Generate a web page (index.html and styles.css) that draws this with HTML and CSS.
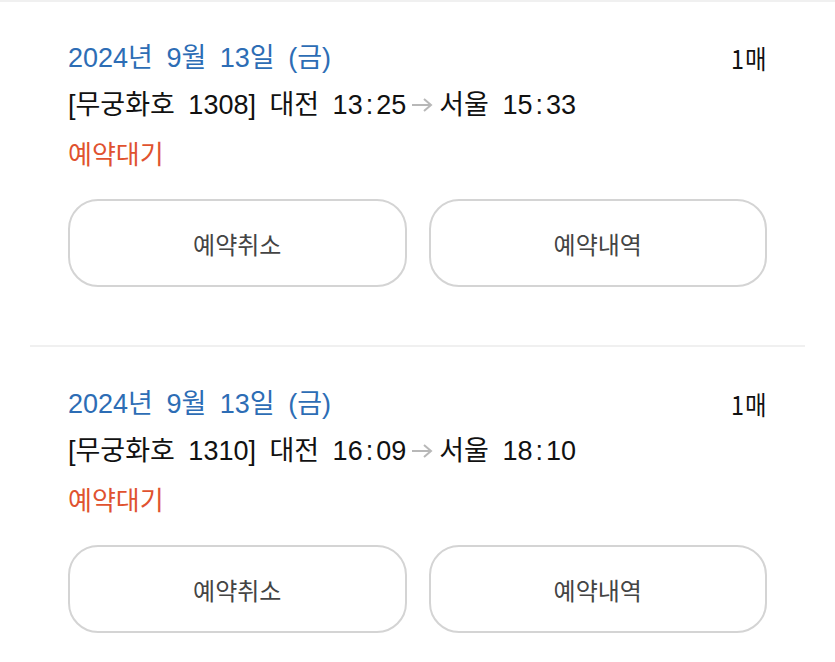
FILE: index.html
```html
<!DOCTYPE html>
<html lang="ko">
<head>
    <meta charset="UTF-8">
    <meta name="viewport" content="width=device-width, initial-scale=1.0">
    <title>예약 내역</title>
    <link rel="stylesheet" href="styles.css">
</head>
<body>
    <div class="list">
        <div class="ticket">
            <div class="ticket-head">
                <span class="date">2024년 9월 13일 (금)</span>
                <span class="count">1매</span>
            </div>
            <p class="route">[무궁화호 1308] 대전 13<span class="colon">:</span>25<svg class="arrow" viewBox="0 0 24 16"><path d="M2 8h19M14 2l7 6-7 6"></path></svg>서울 15<span class="colon">:</span>33</p>
            <p class="status">예약대기</p>
            <div class="actions">
                <button class="btn">예약취소</button>
                <button class="btn">예약내역</button>
            </div>
        </div>

        <div class="ticket">
            <div class="ticket-head">
                <span class="date">2024년 9월 13일 (금)</span>
                <span class="count">1매</span>
            </div>
            <p class="route">[무궁화호 1310] 대전 16<span class="colon">:</span>09<svg class="arrow" viewBox="0 0 24 16"><path d="M2 8h19M14 2l7 6-7 6"></path></svg>서울 18<span class="colon">:</span>10</p>
            <p class="status">예약대기</p>
            <div class="actions">
                <button class="btn">예약취소</button>
                <button class="btn">예약내역</button>
            </div>
        </div>
    </div>
</body>
</html>
```

FILE: styles.css
```css
body {
    margin: 0;
    padding: 0;
    background: #fff;
    color: #111;
    font-family: 'Liberation Sans', 'Noto Sans CJK KR', sans-serif;
    border-top: 2px solid #f0f0f0;
}
.list {
    padding: 0 30px;
}
.ticket {
    padding: 38px 38px 58px 38px;
    border-bottom: 2px solid #f0f0f0;
}
.ticket + .ticket {
    padding-top: 39px;
}
.ticket-head {
    display: flex;
    justify-content: space-between;
    align-items: center;
    height: 36px;
}
.date {
    font-size: 27px;
    word-spacing: 6px;
    color: #2d6db5;
    line-height: 36px;
}
.count {
    font-family: 'Noto Sans CJK KR', sans-serif;
    font-size: 26px;
    color: #111;
    line-height: 36px;
    letter-spacing: 1px;
    transform: scaleX(0.9);
    transform-origin: right center;
}
.route {
    margin: 11px 0 0 0;
    font-size: 27px;
    word-spacing: 6px;
    line-height: 36px;
    display: flex;
    align-items: center;
    white-space: pre;
}
.colon {
    margin: 0 3px;
}
.arrow {
    width: 24px;
    height: 16px;
    margin: 0 5px 0 4px;
    fill: none;
    stroke: #b8b8b8;
    stroke-width: 2;
}
.status {
    margin: 14px 0 0 0;
    font-size: 26px;
    line-height: 36px;
    color: #e0522f;
}
.actions {
    display: grid;
    grid-template-columns: 1fr 1fr;
    gap: 22px;
    margin-top: 26px;
}
.btn {
    height: 88px;
    background: #fff;
    border: 2px solid #d4d4d4;
    border-radius: 30px;
    font-family: 'Noto Sans CJK KR', sans-serif;
    font-size: 24px;
    color: #444;
    cursor: pointer;
}
```
